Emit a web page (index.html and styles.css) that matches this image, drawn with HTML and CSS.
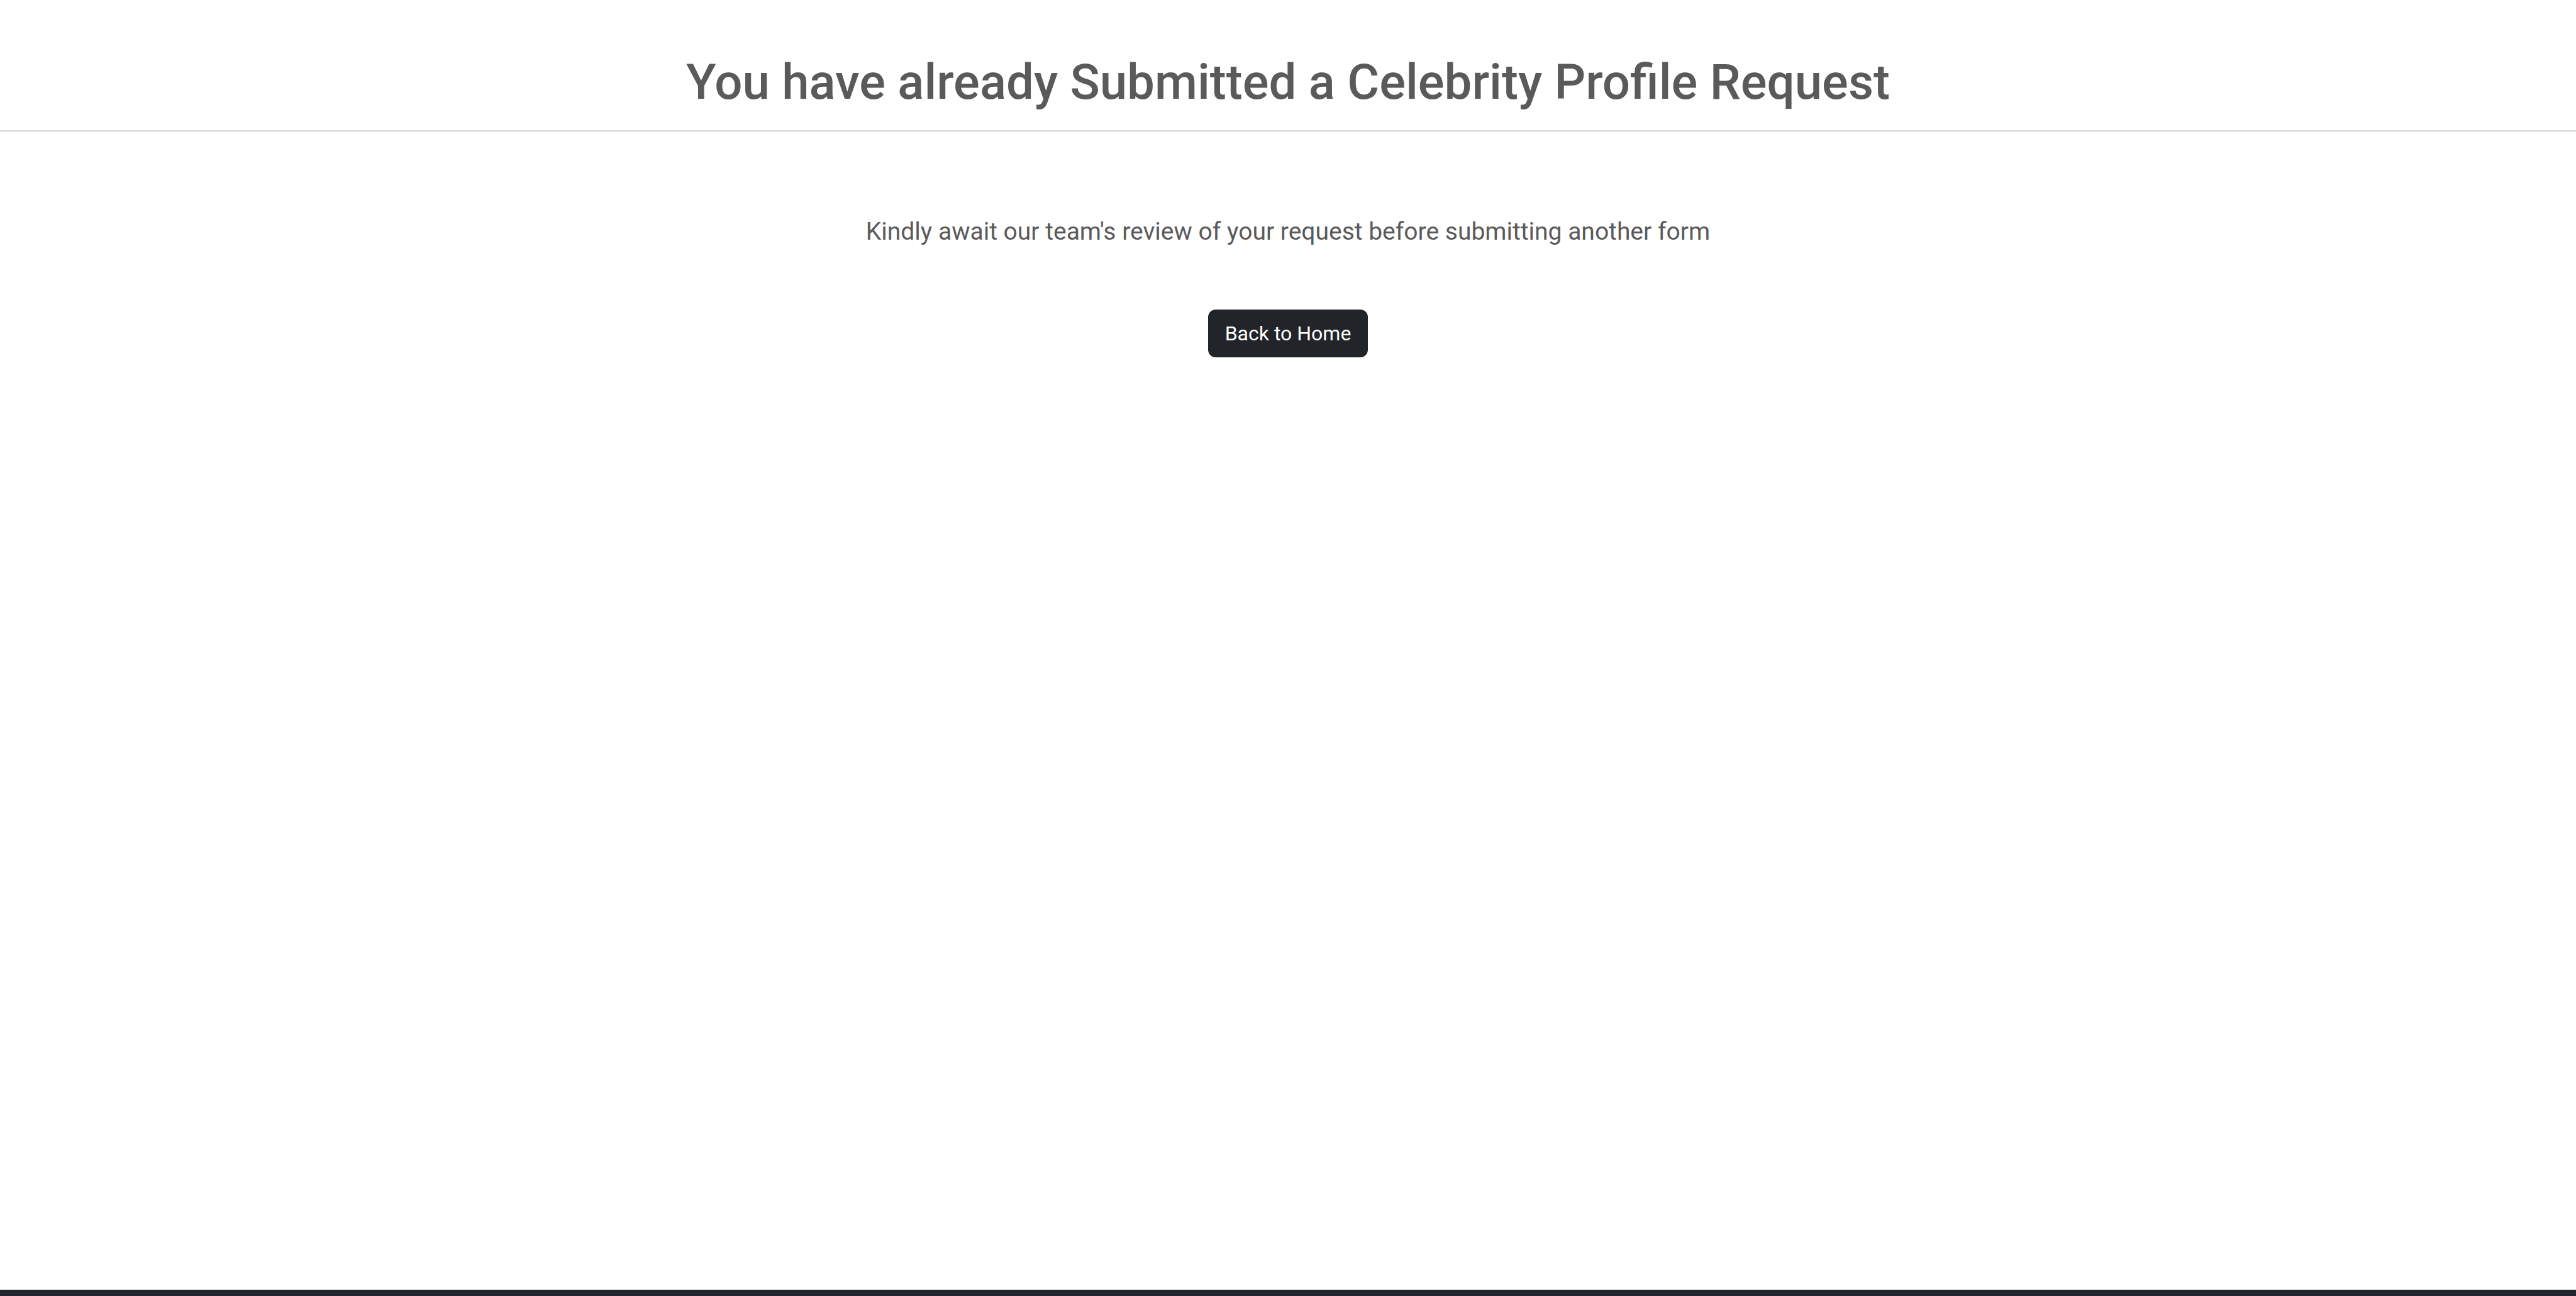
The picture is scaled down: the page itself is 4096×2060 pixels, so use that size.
FILE: index.html
```html
<!DOCTYPE html>
<html lang="en">
<head>
<meta charset="utf-8">
<title>Celebrity Profile Request</title>
<link rel="stylesheet" href="styles.css">
</head>
<body>
<header class="page-header">
<h1 class="page-title">You have already Submitted a Celebrity Profile Request</h1>
</header>
<main class="content">
<p class="message">Kindly await our team's review of your request before submitting another form</p>
<button type="button" class="home-button">Back to Home</button>
</main>
<footer class="page-footer"></footer>
</body>
</html>
```
FILE: styles.css
```css
* {
  box-sizing: border-box;
}

body {
  display: flex;
  flex-direction: column;
  min-height: 100vh;
  margin: 0;
  background: #fff;
  color: #5a5a5a;
  font-family: Roboto, "Liberation Sans", sans-serif;
}

.page-header {
  padding: 83px 32px 28px;
  border-bottom: 2px solid #d4d4d4;
  text-align: center;
}

.page-title {
  margin: 0;
  font-size: 78px;
  font-weight: 500;
  line-height: 96px;
}

.content {
  display: flex;
  flex: 1;
  flex-direction: column;
  align-items: center;
  padding: 129px 32px;
}

.message {
  margin: 0 0 94px;
  font-size: 39px;
  line-height: 60px;
  text-align: center;
}

.home-button {
  padding: 14px 27px;
  border: 0;
  border-radius: 12px;
  background: #212529;
  color: #fff;
  font: 400 32px/48px Roboto, "Liberation Sans", sans-serif;
}

.page-footer {
  height: 10px;
  background: #212529;
}
```
